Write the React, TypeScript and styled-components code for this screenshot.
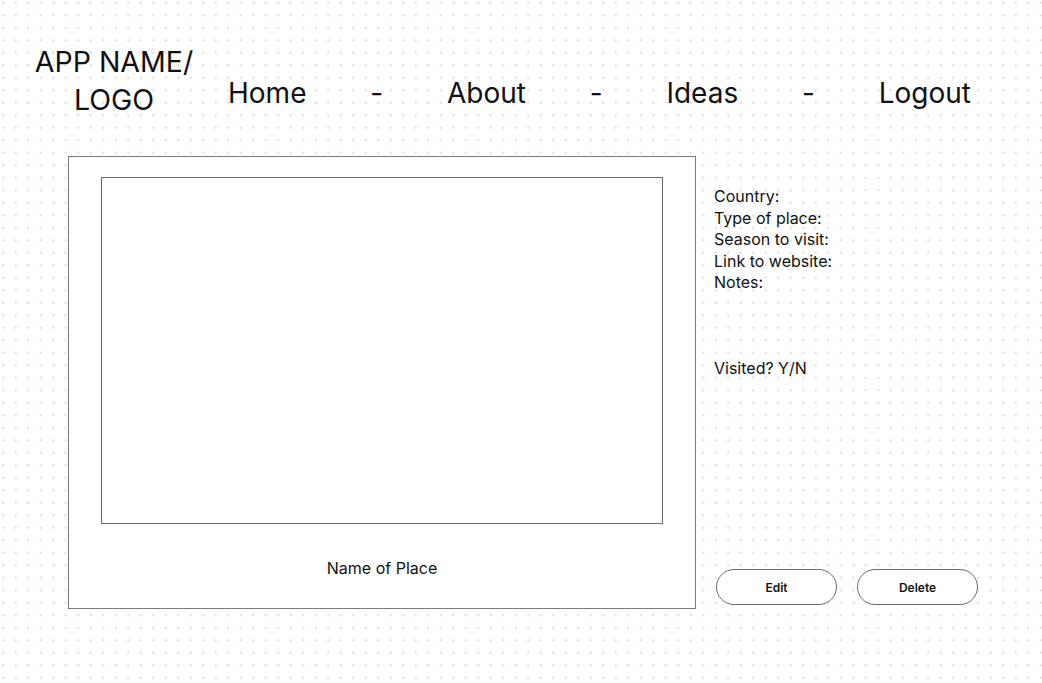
import styled, { createGlobalStyle } from "styled-components";

const GlobalStyle = createGlobalStyle`
  html, body {
    margin: 0;
    padding: 0;
  }
  body {
    font-family: Inter, "Liberation Sans", sans-serif;
    color: #111;
    background-color: #ffffff;
    background-image: radial-gradient(circle, #dfdfdf 1px, transparent 1.3px);
    background-size: 12.5px 12.5px;
    background-position: -3px -3.5px;
    min-height: 683px;
  }
`;

const Page = styled.div`
  width: 1042px;
  height: 683px;
  overflow: hidden;
`;

const Header = styled.header`
  display: flex;
  align-items: flex-start;
  padding: 43px 71px 0 34px;
  gap: 34px;
`;

const Logo = styled.div`
  width: 160px;
  flex-shrink: 0;
  display: flex;
  flex-direction: column;
  align-items: center;
  font-size: 28.5px;
  line-height: 38px;
  white-space: nowrap;
`;

const Nav = styled.nav`
  flex: 1;
  display: flex;
  justify-content: space-between;
  margin-top: 31px;
  font-size: 28px;
  line-height: 38px;
`;

const NavLink = styled.span`
  cursor: pointer;
`;

const Main = styled.main`
  display: flex;
  align-items: stretch;
  gap: 18px;
  padding-left: 68px;
  margin-top: 37px;
`;

const Card = styled.section`
  width: 628px;
  height: 453px;
  box-sizing: border-box;
  border: 1px solid #7a7a7a;
  background: #fff;
  padding: 20px 0 0 32px;
  display: flex;
  flex-direction: column;
`;

const Photo = styled.div`
  width: 562px;
  height: 347px;
  border: 1px solid #6a6a6a;
  box-sizing: border-box;
  background: #fff;
`;

const PlaceName = styled.div`
  width: 562px;
  text-align: center;
  font-size: 16px;
  line-height: 22px;
  margin-top: 33px;
`;

const Details = styled.aside`
  display: flex;
  flex-direction: column;
  padding: 30px 0 4px 0;
  height: 453px;
  box-sizing: border-box;
`;

const InfoList = styled.div`
  display: flex;
  flex-direction: column;
  font-size: 16px;
  line-height: 21.5px;
`;

const Visited = styled.div`
  font-size: 16px;
  line-height: 21.5px;
  margin-top: 64px;
`;

const Actions = styled.div`
  margin-top: auto;
  display: flex;
  gap: 20px;
  padding-left: 2px;
`;

const PillButton = styled.button`
  width: 121px;
  height: 36px;
  border-radius: 18px;
  border: 1px solid #6a6a6a;
  background: #fff;
  font-family: Inter, "Liberation Sans", sans-serif;
  font-size: 12px;
  font-weight: 600;
  color: #111;
  cursor: pointer;
`;

const fields = ["Country:", "Type of place:", "Season to visit:", "Link to website:", "Notes:"];
const links = ["Home", "-", "About", "-", "Ideas", "-", "Logout"];

export default function App() {
  return (
    <Page>
      <GlobalStyle />
      <Header>
        <Logo>
          <span>APP NAME/</span>
          <span>LOGO</span>
        </Logo>
        <Nav>
          {links.map((l, i) => (
            <NavLink key={i}>{l}</NavLink>
          ))}
        </Nav>
      </Header>
      <Main>
        <Card>
          <Photo />
          <PlaceName>Name of Place</PlaceName>
        </Card>
        <Details>
          <InfoList>
            {fields.map((f) => (
              <span key={f}>{f}</span>
            ))}
          </InfoList>
          <Visited>Visited? Y/N</Visited>
          <Actions>
            <PillButton>Edit</PillButton>
            <PillButton>Delete</PillButton>
          </Actions>
        </Details>
      </Main>
    </Page>
  );
}
